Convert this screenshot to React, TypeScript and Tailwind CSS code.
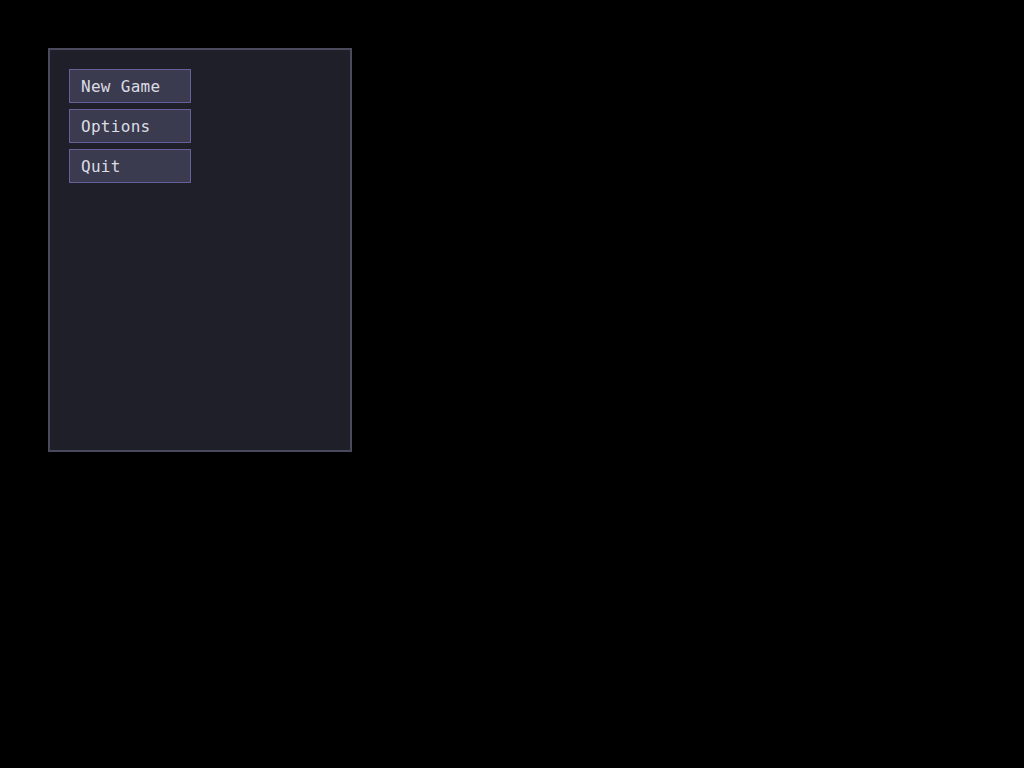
export default function App() {
  const items = ['New Game', 'Options', 'Quit']
  return (
    <div className="min-h-screen w-full bg-black p-12" style={{ fontFamily: '"DejaVu Sans Mono", monospace' }}>
      <div className="flex h-[404px] w-[304px] flex-col items-start gap-[6px] border-2 border-[#4a4a5c] bg-[#1f1f29] p-[19px]">
        {items.map((label) => (
          <button
            key={label}
            className="h-[34px] w-[122px] border border-[#66609a] bg-[#3b3b4f] px-[11px] pt-[2px] text-left text-[16px] tracking-[0.3px] text-[#dcdce4]"
          >
            {label}
          </button>
        ))}
      </div>
    </div>
  )
}
